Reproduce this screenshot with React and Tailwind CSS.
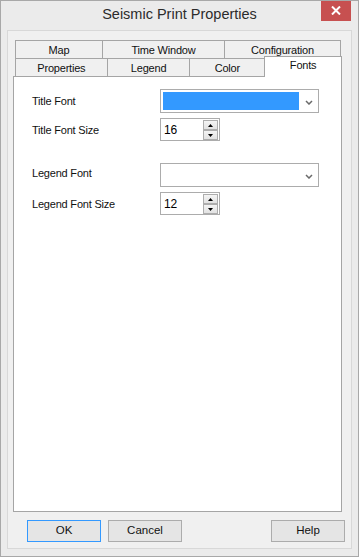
import React from "react";

const font = { fontFamily: '"Liberation Sans", Arial, sans-serif' };

function Tab({ w, children, first }) {
  return (
    <div
      className={`h-[18px] ${w} ${first ? "" : "-ml-px"} border border-b-0 border-[#a5a5a5] bg-[#f0f0f0] flex items-center justify-center text-[11px] tracking-[-0.2px] text-[#111] leading-none pt-px`}
    >
      {children}
    </div>
  );
}

function Chevron() {
  return (
    <svg width="8" height="5" viewBox="0 0 8 5" className="block">
      <polyline points="1,1 4,4 7,1" fill="none" stroke="#6a6a6a" strokeWidth="1.5" />
    </svg>
  );
}

function Combo({ selected }) {
  return (
    <div className="w-[159px] h-[24px] border border-[#acacac] bg-white flex items-stretch p-[2px]">
      <div className={`w-[136px] ${selected ? "bg-[#3399ff]" : ""}`} />
      <div className="flex-1 flex items-center justify-center pl-[3px] pt-[2px]">
        <Chevron />
      </div>
    </div>
  );
}

function SpinBtn({ up }) {
  return (
    <div className="w-[15px] h-[10px] border border-[#adadad] bg-gradient-to-b from-[#f4f4f4] to-[#e2e2e2] flex items-center justify-center">
      <svg width="5" height="3" viewBox="0 0 5 3" className="block">
        {up ? <polygon points="0,3 5,3 2.5,0" fill="#000" /> : <polygon points="0,0 5,0 2.5,3" fill="#000" />}
      </svg>
    </div>
  );
}

function Spin({ value }) {
  return (
    <div className="w-[60px] h-[23px] border border-[#acacac] bg-white flex items-center pr-[1px]">
      <div className="flex-1 pl-[3px] text-[12px] text-black leading-none">{value}</div>
      <div className="flex flex-col gap-0 pt-[1px]">
        <SpinBtn up />
        <SpinBtn />
      </div>
    </div>
  );
}

function Button({ children, def }) {
  return (
    <div
      className={`w-[74px] h-[22px] border ${def ? "border-[#3399ff]" : "border-[#acacac]"} bg-[#e5e5e5] flex items-center justify-center text-[11.5px] text-[#111] leading-none`}
    >
      {children}
    </div>
  );
}

export default function App() {
  return (
    <div
      style={font}
      className="w-[359px] h-[557px] border border-[#a8a8a8] bg-[#ebebeb] flex flex-col relative overflow-hidden"
    >
      <div className="h-[29px] flex items-center justify-center text-[14.5px] text-[#2b2b2b] pb-[1px]">
        Seismic Print Properties
      </div>
      <div className="absolute right-[7px] top-[-1px] w-[30px] h-[21px] bg-[#c75050] flex items-center justify-center">
        <svg width="10" height="9" viewBox="0 0 10 9">
          <path d="M1 0.5 L9 8.5 M9 0.5 L1 8.5" stroke="#ffffff" strokeWidth="2" />
        </svg>
      </div>
      <div className="mx-[6px] mb-[7px] flex-1 border border-[#d8d8d8] bg-[#f0f0f0] flex flex-col pt-[9px] pb-[6px]">
        <div className="ml-[5px] w-[329px] flex flex-col">
          <div className="flex pl-[2px] h-[18px]">
            <Tab w="w-[88px]" first>Map</Tab>
            <Tab w="w-[123px]">Time Window</Tab>
            <Tab w="w-[117px]">Configuration</Tab>
          </div>
          <div className="flex pl-[2px] h-[18px] items-end">
            <Tab w="w-[93px]" first>Properties</Tab>
            <Tab w="w-[84px]">Legend</Tab>
            <Tab w="w-[76px]">Color</Tab>
            <div className="relative z-10 -ml-px -mb-px w-[78px] h-[21px] border border-b-0 border-[#a5a5a5] bg-white flex items-start justify-center pt-[3px] text-[11px] tracking-[-0.2px] text-[#111] leading-none">
              Fonts
            </div>
          </div>
        </div>
        <div className="ml-[5px] w-[329px] flex-1 border border-[#a5a5a5] bg-white pl-[18px] pt-[12px] text-[11px] tracking-[-0.2px] text-[#111]">
          <div className="flex items-center h-[24px]">
            <div className="w-[128px]">Title Font</div>
            <Combo selected />
          </div>
          <div className="flex items-center h-[23px] mt-[5px]">
            <div className="w-[128px] pt-[2px]">Title Font Size</div>
            <Spin value="16" />
          </div>
          <div className="flex items-center h-[24px] mt-[22px]">
            <div className="w-[128px] pb-[3px]">Legend Font</div>
            <Combo />
          </div>
          <div className="flex items-center h-[23px] mt-[5px]">
            <div className="w-[128px] pt-[1px]">Legend Font Size</div>
            <Spin value="12" />
          </div>
        </div>
        <div className="flex mt-[8px] pl-[19px] pr-[6px]">
          <Button def>OK</Button>
          <div className="ml-[7px]">
            <Button>Cancel</Button>
          </div>
          <div className="ml-auto">
            <Button>Help</Button>
          </div>
        </div>
      </div>
    </div>
  );
}
